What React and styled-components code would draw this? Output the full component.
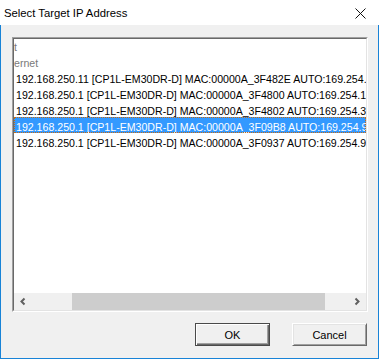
import React from "react";
import styled, { createGlobalStyle } from "styled-components";

const GlobalStyle = createGlobalStyle`
  html, body {
    margin: 0;
    padding: 0;
    background: #ffffff;
  }
  body {
    font-family: "Liberation Sans", Arial, sans-serif;
  }
`;

const Window = styled.div`
  width: 379px;
  height: 359px;
  display: flex;
  flex-direction: column;
  box-sizing: border-box;
`;

const TitleBar = styled.div`
  height: 25px;
  flex: none;
  display: flex;
  align-items: center;
  justify-content: space-between;
  padding: 1px 13px 0 4px;
  box-sizing: border-box;
  background: #ffffff;
`;

const Title = styled.span`
  font-family: "Liberation Sans", Arial, sans-serif;
  font-size: 11.3px;
  color: #000000;
`;

const CloseIcon = () => (
  <svg width="11" height="11" viewBox="0 0 11 11">
    <path d="M0.5 0.5 L10.5 10.5 M10.5 0.5 L0.5 10.5" stroke="#111" strokeWidth="1" fill="none" />
  </svg>
);

const Body = styled.div`
  flex: 1;
  display: flex;
  flex-direction: column;
  background: #f0f0f0;
  border: 1px solid #1883d7;
  border-top: none;
  padding: 12px 10px 0 11px;
  box-sizing: border-box;
`;

const ListFrame = styled.div`
  height: 275px;
  flex: none;
  display: flex;
  border: 1px solid;
  border-color: #a0a0a0 #ffffff #ffffff #a0a0a0;
  box-sizing: border-box;
`;

const ListInner = styled.div`
  flex: 1;
  display: flex;
  flex-direction: column;
  min-width: 0;
  border: 1px solid;
  border-color: #696969 #e3e3e3 #e3e3e3 #696969;
  background: #ffffff;
`;

const Rows = styled.div`
  flex: 1;
  overflow: hidden;
  display: flex;
  flex-direction: column;
  min-height: 0;
`;

const RowsTrack = styled.div`
  margin-top: -2px;
  display: flex;
  flex-direction: column;
`;

const Row = styled.div`
  height: 16px;
  flex: none;
  box-sizing: border-box;
  padding: 2px 0 0 ${(p) => (p.$group ? 0 : 2)}px;
  line-height: 16px;
  font-family: "Liberation Sans", Arial, sans-serif;
  font-size: 10.6px;
  white-space: nowrap;
  overflow: hidden;
  color: ${(p) => (p.$selected ? "#ffffff" : p.$group ? "#7a7a7a" : "#000000")};
  background: ${(p) => (p.$selected ? "#3399ff" : "transparent")};
  outline: ${(p) => (p.$selected ? "1px dotted #c86a10" : "none")};
  outline-offset: -1px;
`;

const ScrollBar = styled.div`
  height: 17px;
  flex: none;
  display: flex;
  background: #f0f0f0;
`;

const ArrowButton = styled.div`
  width: 17px;
  height: 17px;
  flex: none;
  display: flex;
`;

const Track = styled.div`
  flex: 1;
  display: flex;
`;

const Thumb = styled.div`
  margin-left: 41px;
  width: 253px;
  background: #cdcdcd;
`;

const Chevron = ({ dir }) => (
  <svg width="17" height="17" viewBox="0 0 17 17">
    <polyline
      points={dir === "left" ? "10.5,5.5 7.5,8.5 10.5,11.5" : "6.5,5.5 9.5,8.5 6.5,11.5"}
      stroke="#606060"
      strokeWidth="2"
      fill="none"
    />
  </svg>
);

const ButtonRow = styled.div`
  display: flex;
  justify-content: flex-end;
  gap: 22px;
  margin: 11px 1px 0 0;
`;

const Button = styled.button`
  width: 75px;
  height: 23px;
  padding: 0;
  margin: 0;
  font-family: "Liberation Sans", Arial, sans-serif;
  font-size: 11px;
  color: #000000;
  background: #f0f0f0;
  border: 1px solid;
  border-color: ${(p) => (p.$default ? "#4a4a4a" : "#ffffff #696969 #696969 #ffffff")};
  box-shadow: ${(p) =>
    p.$default
      ? "inset 1px 1px #ffffff, inset -1px -1px #696969, inset -2px -2px #a0a0a0"
      : "inset 1px 1px #e3e3e3, inset -1px -1px #a0a0a0"};
  box-sizing: border-box;
`;

const devices = [
  { text: "t", group: true },
  { text: "ernet", group: true },
  { text: "192.168.250.11 [CP1L-EM30DR-D] MAC:00000A_3F482E AUTO:169.254.72.46" },
  { text: "192.168.250.1 [CP1L-EM30DR-D] MAC:00000A_3F4800 AUTO:169.254.1.0" },
  { text: "192.168.250.1 [CP1L-EM30DR-D] MAC:00000A_3F4802 AUTO:169.254.3.2" },
  { text: "192.168.250.1 [CP1L-EM30DR-D] MAC:00000A_3F09B8 AUTO:169.254.9.184", selected: true },
  { text: "192.168.250.1 [CP1L-EM30DR-D] MAC:00000A_3F0937 AUTO:169.254.9.55" },
];

const App = () => (
  <>
    <GlobalStyle />
    <Window>
      <TitleBar>
        <Title>Select Target IP Address</Title>
        <CloseIcon />
      </TitleBar>
      <Body>
        <ListFrame>
          <ListInner>
            <Rows>
              <RowsTrack>
                {devices.map((d, i) => (
                  <Row key={i} $group={d.group} $selected={d.selected}>
                    {d.text}
                  </Row>
                ))}
              </RowsTrack>
            </Rows>
            <ScrollBar>
              <ArrowButton>
                <Chevron dir="left" />
              </ArrowButton>
              <Track>
                <Thumb />
              </Track>
              <ArrowButton>
                <Chevron dir="right" />
              </ArrowButton>
            </ScrollBar>
          </ListInner>
        </ListFrame>
        <ButtonRow>
          <Button $default>OK</Button>
          <Button>Cancel</Button>
        </ButtonRow>
      </Body>
    </Window>
  </>
);

export default App;
